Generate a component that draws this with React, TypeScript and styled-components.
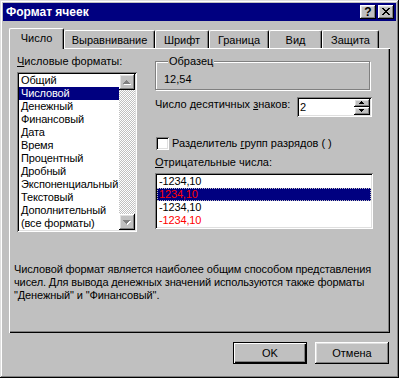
import React from 'react';
import styled, { createGlobalStyle, css } from 'styled-components';

const GlobalStyle = createGlobalStyle`
	html, body {
		margin: 0;
		padding: 0;
		background: #c0c0c0;
	}
	body {
		font-family: "Liberation Sans", Arial, sans-serif;
		font-size: 11px;
		color: #000;
	}
	* {
		box-sizing: border-box;
	}
`;

const raised = css`
	box-shadow: inset -1px -1px #000, inset 1px 1px #fff, inset -2px -2px #808080, inset 2px 2px #dfdfdf;
`;

const sunken = css`
	box-shadow: inset 1px 1px #808080, inset -1px -1px #fff, inset 2px 2px #000, inset -2px -2px #dfdfdf;
`;

const Window = styled.div`
	width: 399px;
	height: 378px;
	padding: 3px;
	background: #c0c0c0;
	box-shadow: inset -1px -1px #000, inset 1px 1px #dfdfdf, inset -2px -2px #808080, inset 2px 2px #fff;
	display: flex;
	flex-direction: column;
`;

const TitleBar = styled.div`
	height: 18px;
	background: #000080;
	display: flex;
	align-items: center;
	padding: 0 2px 0 3px;
`;

const Title = styled.span`
	color: #fff;
	font-weight: bold;
	font-size: 12px;
	white-space: nowrap;
`;

const TitleButtons = styled.div`
	margin-left: auto;
	display: flex;
	gap: 2px;
`;

const TitleButton = styled.div`
	width: 16px;
	height: 14px;
	background: #c0c0c0;
	${raised};
	display: flex;
	align-items: center;
	justify-content: center;
	font-weight: bold;
	font-size: 12px;
	line-height: 1;
	padding-bottom: 1px;
`;

const Content = styled.div`
	flex: 1;
	padding: 7px 6px 0 6px;
	display: flex;
	flex-direction: column;
`;

const TabRow = styled.div`
	display: flex;
	align-items: flex-end;
	height: 20px;
	padding-left: 2px;
	position: relative;
	z-index: 1;
`;

const Tab = styled.div<{ $w: number; $active?: boolean }>`
	width: ${(p) => p.$w}px;
	height: ${(p) => (p.$active ? 21 : 18)}px;
	margin-left: ${(p) => (p.$active ? -2 : 0)}px;
	margin-bottom: ${(p) => (p.$active ? -1 : 0)}px;
	padding-bottom: ${(p) => (p.$active ? 3 : 0)}px;
	background: #c0c0c0;
	border-left: 1px solid #fff;
	border-top: 1px solid #fff;
	border-right: 1px solid #000;
	border-radius: 2px 2px 0 0;
	box-shadow: inset -1px 0 #808080;
	display: flex;
	align-items: center;
	justify-content: center;
	white-space: nowrap;
	position: relative;
	z-index: ${(p) => (p.$active ? 2 : 0)};
`;

const Panel = styled.div`
	width: 381px;
	height: 285px;
	background: #c0c0c0;
	box-shadow: inset 1px 1px #fff, inset -1px -1px #000, inset -2px -2px #808080;
	padding: 7px 17px 0 8px;
	display: flex;
	flex-direction: column;
`;

const Columns = styled.div`
	display: grid;
	grid-template-columns: 120px 218px;
	column-gap: 18px;
	align-items: start;
`;

const Column = styled.div`
	display: flex;
	flex-direction: column;
`;

const FieldLabel = styled.div<{ $mt?: number; $mb?: number }>`
	line-height: 13px;
	height: 13px;
	white-space: nowrap;
	margin-top: ${(p) => p.$mt ?? 0}px;
	margin-bottom: ${(p) => p.$mb ?? 0}px;
`;

const ListBox = styled.div<{ $h: number }>`
	height: ${(p) => p.$h}px;
	background: #fff;
	${sunken};
	padding: 2px;
	display: flex;
	overflow: hidden;
`;

const ListItems = styled.div`
	flex: 1;
	overflow: hidden;
	letter-spacing: -0.15px;
`;

const ListItem = styled.div<{ $selected?: boolean; $red?: boolean; $focus?: boolean }>`
	height: 13px;
	line-height: 12px;
	padding-left: 2px;
	white-space: nowrap;
	background: ${(p) => (p.$selected ? '#000080' : 'transparent')};
	color: ${(p) => (p.$red ? '#ff0000' : p.$selected ? '#fff' : '#000')};
	outline: ${(p) => (p.$focus ? '1px dotted #c0c0c0' : 'none')};
	outline-offset: -1px;
`;

const ScrollBar = styled.div`
	width: 16px;
	display: flex;
	flex-direction: column;
`;

const ScrollButton = styled.div`
	width: 16px;
	height: 16px;
	background: #c0c0c0;
	${raised};
	display: flex;
`;

const ScrollTrack = styled.div`
	flex: 1;
	background: repeating-conic-gradient(#fff 0 25%, #c0c0c0 0 50%) 0 0 / 2px 2px;
`;

const GroupBox = styled.fieldset`
	width: 215px;
	margin: 0;
	padding: 0 0 3px 8px;
	border: 1px solid #808080;
	box-shadow: 1px 1px 0 #fff, inset 1px 1px 0 #fff;
`;

const GroupTitle = styled.legend`
	margin-left: 4px;
	padding: 0 1px;
	line-height: 13px;
	background: #c0c0c0;
`;

const Sample = styled.div`
	margin-top: 5px;
	line-height: 13px;
`;

const SpinRow = styled.div`
	display: flex;
	align-items: flex-start;
	margin-top: 7px;
`;

const SpinLabel = styled.div`
	flex: 1;
	padding-top: 1px;
	line-height: 13px;
	white-space: nowrap;
`;

const SpinBox = styled.div`
	width: 75px;
	height: 20px;
	margin-right: 1px;
	background: #fff;
	${sunken};
	padding: 2px;
	display: flex;
`;

const SpinValue = styled.div`
	flex: 1;
	padding-left: 1px;
	line-height: 16px;
`;

const SpinButtons = styled.div`
	width: 16px;
	display: flex;
	flex-direction: column;
`;

const SpinButton = styled.div`
	height: 8px;
	background: #c0c0c0;
	${raised};
	display: flex;
`;

const CheckRow = styled.div`
	display: flex;
	align-items: center;
	margin-top: 20px;
	padding-left: 1px;
`;

const CheckBox = styled.div`
	width: 13px;
	height: 13px;
	background: #fff;
	${sunken};
`;

const CheckLabel = styled.div`
	margin-left: 3px;
	line-height: 13px;
	white-space: nowrap;
`;

const Description = styled.div`
	margin: 31px 0 0 -3px;
	line-height: 13px;
	white-space: nowrap;
	letter-spacing: -0.12px;
`;

const Footer = styled.div`
	display: flex;
	justify-content: flex-end;
	gap: 8px;
	margin-top: 9px;
	padding-right: 1px;
`;

const Button = styled.div<{ $default?: boolean }>`
	width: 74px;
	height: 22px;
	background: #c0c0c0;
	display: flex;
	align-items: center;
	justify-content: center;
	${(p) =>
		p.$default
			? css`
					box-shadow: inset 0 0 0 1px #000, inset 2px 2px #fff, inset -2px -2px #000, inset -3px -3px #808080;
			  `
			: raised};
`;

const ArrowUp = ({ disabled }: { disabled?: boolean }) => (
	<svg width="16" height="12" viewBox="0 0 16 12" shapeRendering="crispEdges">
		{disabled && <path transform="translate(1 1)" d="M7 6h1v1h1v1h1v1h1v1H4V9h1V8h1V7h1z" fill="#fff" />}
		<path d="M7 6h1v1h1v1h1v1h1v1H4V9h1V8h1V7h1z" fill={disabled ? '#808080' : '#000'} />
	</svg>
);

const ArrowDown = ({ disabled }: { disabled?: boolean }) => (
	<svg width="16" height="12" viewBox="0 0 16 12" shapeRendering="crispEdges">
		{disabled && <path transform="translate(1 1)" d="M4 6h7v1h-1v1h-1v1h-1v1H7V9H6V8H5V7H4z" fill="#fff" />}
		<path d="M4 6h7v1h-1v1h-1v1h-1v1H7V9H6V8H5V7H4z" fill={disabled ? '#808080' : '#000'} />
	</svg>
);

const SpinUp = () => (
	<svg width="16" height="8" viewBox="0 0 16 8" shapeRendering="crispEdges">
		<path d="M7 2h1v1h1v1h1v1H5V4h1V3h1z" fill="#000" />
	</svg>
);

const SpinDown = () => (
	<svg width="16" height="8" viewBox="0 0 16 8" shapeRendering="crispEdges">
		<path d="M5 2h5v1H9v1H8v1H7V4H6V3H5z" fill="#000" />
	</svg>
);

const CloseGlyph = () => (
	<svg width="8" height="7" viewBox="0 0 8 7" shapeRendering="crispEdges">
		<path
			d="M0 0h2v1H0zM6 0h2v1H6zM1 1h2v1H1zM5 1h2v1H5zM2 2h4v1H2zM3 3h2v1H3zM2 4h4v1H2zM1 5h2v1H1zM5 5h2v1H5zM0 6h2v1H0zM6 6h2v1H6z"
			fill="#000"
		/>
	</svg>
);

const tabs: [string, number][] = [
	['Число', 55],
	['Выравнивание', 91],
	['Шрифт', 54],
	['Граница', 60],
	['Вид', 53],
	['Защита', 57],
];

const formats = [
	'Общий',
	'Числовой',
	'Денежный',
	'Финансовый',
	'Дата',
	'Время',
	'Процентный',
	'Дробный',
	'Экспоненциальный',
	'Текстовый',
	'Дополнительный',
	'(все форматы)',
];

const negatives = [
	{ text: '-1234,10', red: false },
	{ text: '1234,10', red: true },
	{ text: '-1234,10', red: false },
	{ text: '-1234,10', red: true },
];

const App: React.FC = () => {
	return (
		<>
			<GlobalStyle />
			<Window>
				<TitleBar>
					<Title>Формат ячеек</Title>
					<TitleButtons>
						<TitleButton>?</TitleButton>
						<TitleButton>
							<CloseGlyph />
						</TitleButton>
					</TitleButtons>
				</TitleBar>
				<Content>
					<TabRow>
						{tabs.map(([label, w], i) => (
							<Tab key={label} $w={w} $active={i === 0}>
								{label}
							</Tab>
						))}
					</TabRow>
					<Panel>
						<Columns>
							<Column>
								<FieldLabel $mb={4}>
									<u>Ч</u>исловые форматы:
								</FieldLabel>
								<ListBox $h={160}>
									<ListItems>
										{formats.map((f, i) => (
											<ListItem key={f} $selected={i === 1}>
												{f}
											</ListItem>
										))}
									</ListItems>
									<ScrollBar>
										<ScrollButton>
											<ArrowUp disabled />
										</ScrollButton>
										<ScrollTrack />
										<ScrollButton>
											<ArrowDown disabled />
										</ScrollButton>
									</ScrollBar>
								</ListBox>
							</Column>
							<Column>
								<GroupBox>
									<GroupTitle>Образец</GroupTitle>
									<Sample>12,54</Sample>
								</GroupBox>
								<SpinRow>
									<SpinLabel>
										Число десятичных <u>з</u>наков:
									</SpinLabel>
									<SpinBox>
										<SpinValue>2</SpinValue>
										<SpinButtons>
											<SpinButton>
												<SpinUp />
											</SpinButton>
											<SpinButton>
												<SpinDown />
											</SpinButton>
										</SpinButtons>
									</SpinBox>
								</SpinRow>
								<CheckRow>
									<CheckBox />
									<CheckLabel>
										Разделитель <u>г</u>рупп разрядов ( )
									</CheckLabel>
								</CheckRow>
								<FieldLabel $mt={6} $mb={4}>
									<u>О</u>трицательные числа:
								</FieldLabel>
								<ListBox $h={56}>
									<ListItems>
										{negatives.map((n, i) => (
											<ListItem key={i} $red={n.red} $selected={i === 1} $focus={i === 1}>
												{n.text}
											</ListItem>
										))}
									</ListItems>
								</ListBox>
							</Column>
						</Columns>
						<Description>
							Числовой формат является наиболее общим способом представления
							<br />
							чисел. Для вывода денежных значений используются также форматы
							<br />
							"Денежный" и "Финансовый".
						</Description>
					</Panel>
					<Footer>
						<Button $default>OK</Button>
						<Button>Отмена</Button>
					</Footer>
				</Content>
			</Window>
		</>
	);
};

export default App;
